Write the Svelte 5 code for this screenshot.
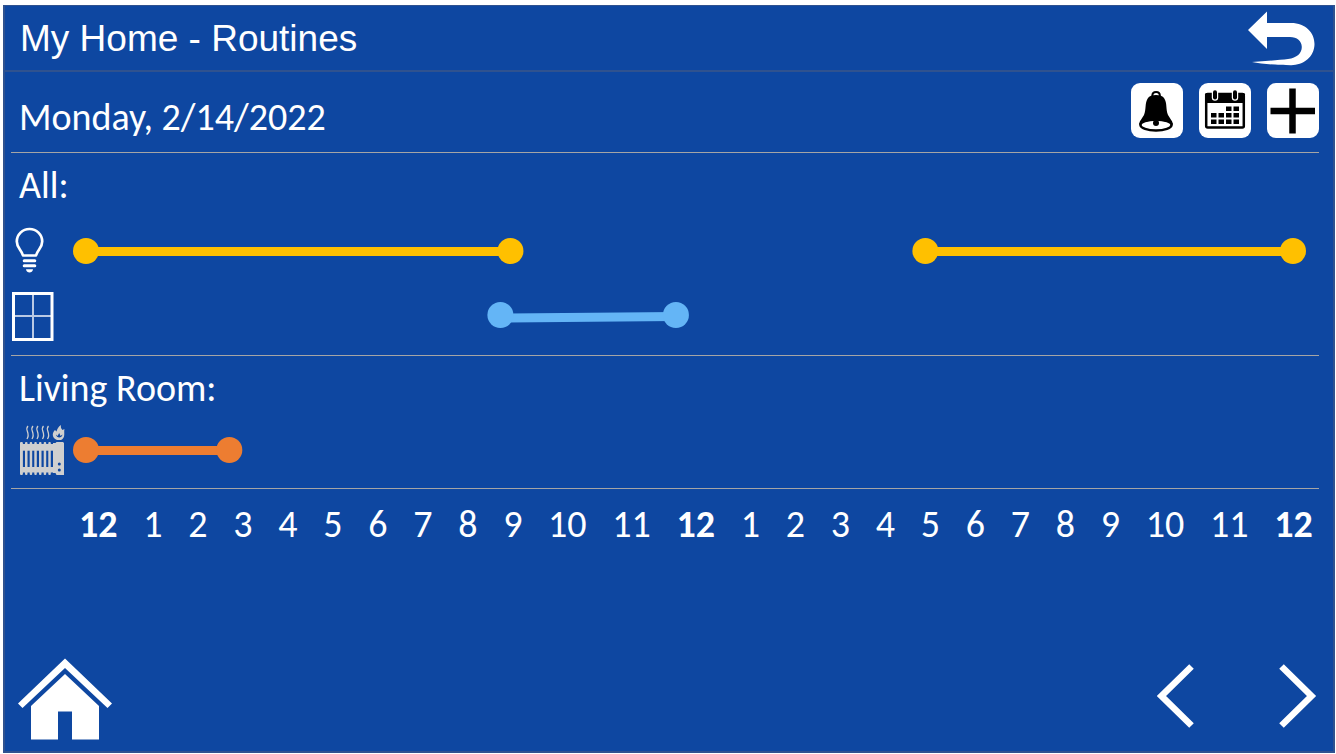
<script>
  // Hours are counted from midnight; the axis covers one full day.
  const groups = [
    {
      name: 'All:',
      rows: [
        { device: 'light', color: '#ffc000', spans: [{ from: 0, to: 8.44 }, { from: 16.69, to: 24 }] },
        { device: 'window', color: '#64b5f6', slope: true, spans: [{ from: 8.24, to: 11.73 }] }
      ]
    },
    {
      name: 'Living Room:',
      rows: [{ device: 'heater', color: '#ed7d31', spans: [{ from: 0, to: 2.85 }] }]
    }
  ];
  const hours = Array.from({ length: 25 }, (_, h) => h % 12 || 12);
  const pct = (h) => `${(h / 24) * 100}%`;
  const fins = [25, 29.7, 34.3, 39, 43.7, 48.3];
</script>

<main class="panel">
  <header class="titlebar">
    <h1>My Home - Routines</h1>
    <button class="plain" aria-label="Back">
      <svg width="70" height="58" viewBox="1246 10 70 58">
        <path fill="#fff" d="M1248 30 L1267 11.5 V23 H1291 C1306 23 1314.5 33 1314.5 44 C1314.5 57 1303 65.3 1291 65.2 C1278 65 1262 64 1252 62 C1265 61 1280 60 1288 59 C1297 58 1301.8 53 1301.8 47 C1301.8 41 1297 37 1290 37 H1267 V49 Z" />
      </svg>
    </button>
  </header>

  <div class="datebar">
    <h2>Monday, 2/14/2022</h2>
    <div class="actions">
      <button class="tile" aria-label="Alerts">
        <svg width="52" height="55" viewBox="1131 83 52 55">
          <path d="M1152.3 96 C1152.3 90.8 1159.9 90.8 1159.9 96" fill="none" stroke="#000" stroke-width="2" />
          <path d="M1148 98 C1150 94 1162 94 1164 98 C1167.5 103 1165.500 109 1168 115 C1169.500 118 1172 120 1173 124 C1170 132 1142 132 1139 124 C1140 120 1142.500 118 1144 115 C1146.500 109 1144.500 103 1148 98 Z" />
          <ellipse cx="1156" cy="125" rx="15.500" ry="5.500" fill="#fff" stroke="#000" stroke-width="2.500" />
          <path d="M1143 119.500 H1169 L1168 122 C1160 119.800 1152 119.800 1144 122 Z" />
          <circle cx="1156" cy="123" r="3" />
        </svg>
      </button>
      <button class="tile" aria-label="Calendar">
        <svg width="52" height="55" viewBox="1200 83 52 55">
          <rect x="1207.200" y="94" width="37.600" height="33.600" rx="1.500" fill="none" stroke="#000" stroke-width="2.500" />
          <rect x="1206" y="93" width="40" height="10" rx="1.500" />
          {#each [1216, 1236] as x}
            <rect x={x - 3.2} y="89.300" width="6.400" height="11.400" rx="3.200" fill="#fff" />
            <rect x={x - 2} y="90.200" width="4" height="9.400" rx="2" />
          {/each}
          {#each [[1227, 106.5], [1234.5, 106.5], [1212, 113], [1219.5, 113], [1227, 113], [1234.5, 113], [1212, 119.5], [1219.5, 119.5], [1227, 119.5], [1234.5, 119.5]] as [x, y]}
            <rect {x} {y} width="5.500" height="4.500" />
          {/each}
        </svg>
      </button>
      <button class="tile" aria-label="Add routine">
        <svg width="52" height="55" viewBox="1266 84 52 55">
          <path d="M1269.500 112 H1314 M1291.500 89.500 V134.500" stroke="#000" stroke-width="6.500" />
        </svg>
      </button>
    </div>
  </div>

  {#each groups as group}
    <section class="group">
      <h2>{group.name}</h2>
      {#each group.rows as row}
        <div class="row">
          {#if row.device === 'light'}
            <svg class="device" width="54" height="52" viewBox="11 225 54 52" role="img" aria-label="Light">
              <path d="M23 255.500 C21.500 249.500 16.800 248 16.800 241.500 A12.700 12.500 0 0 1 42.200 241.500 C42.200 248 37.500 249.500 36 255.500 Z" fill="none" stroke="#fff" stroke-width="2.700" stroke-linejoin="round" />
              <path d="M24.200 260.700 H34.800 M24.200 265.800 H34.800" stroke="#fff" stroke-width="3" stroke-linecap="round" />
              <path d="M26 269.300 H33 C32.500 273.600 26.500 273.600 26 269.300 Z" fill="#fff" />
            </svg>
          {:else if row.device === 'window'}
            <svg class="device" width="54" height="52" viewBox="11 290 54 52" role="img" aria-label="Window">
              <path d="M33 293 V340 M13 316 H52" stroke="#b9c9e4" stroke-width="2" />
              <rect x="13.500" y="293.500" width="38.500" height="46" fill="none" stroke="#fff" stroke-width="3" />
            </svg>
          {:else}
            <svg class="device" width="54" height="52" viewBox="11 424 54 52" role="img" aria-label="Heater">
              <g fill="#cfcfcf">
                <rect x="20" y="444" width="44" height="6.700" />
                <rect x="20" y="467" width="44" height="5.500" />
                <rect x="20" y="442" width="2.900" height="33" rx="1" />
                {#each fins as x}
                  <rect {x} y="442" width="2.500" height="33" rx="1" />
                {/each}
                <path d="M53 443 H55.500 L56.500 442 H63 L64 443 V475 H56.500 L55.500 473 H53 Z" />
                <path d="M57 440 C51.500 438 52 433 55 430 L56.500 431.500 C57 429 58.500 426.500 61 425 C60.500 428 61.500 428.500 62.500 430 L64.500 429 C63.500 432 66 438 61 440 Z" />
              </g>
              <path d="M56 434.500 L57.500 436 L59.200 433 L60.500 436 L62.500 434.500 C62 438.500 56.500 438.500 56 434.500 Z" fill="#0e47a1" />
              <circle cx="59.300" cy="464" r="1.500" fill="#0e47a1" />
              <circle cx="59.300" cy="470" r="1.500" fill="#0e47a1" />
              {#each [28, 33, 38, 43.5, 48.5] as x}
                <path d="M{x} 426 C{x - 4} 430 {x + 3} 433 {x - 1} 439" fill="none" stroke="#cfcfcf" stroke-width="1.300" />
              {/each}
            </svg>
          {/if}
          <svg class="track" role="img" aria-label="Scheduled hours">
            {#each row.spans as span}
              <line x1={pct(span.from)} x2={pct(span.to)} y1={row.slope ? 15 : 13.5} y2={row.slope ? 13.5 : 13.5} stroke={row.color} stroke-width="9" />
              <circle cx={pct(span.from)} cy={row.slope ? 12 : 13} r="13" fill={row.color} />
              <circle cx={pct(span.to)} cy={row.slope ? 12 : 13} r="13" fill={row.color} />
            {/each}
          </svg>
        </div>
      {/each}
    </section>
  {/each}

  <ol class="axis">
    {#each hours as hour}
      <li class:major={hour === 12}>{hour}</li>
    {/each}
  </ol>

  <footer class="nav">
    <button class="plain" aria-label="Home">
      <svg width="96" height="84" viewBox="17 657 96 84">
        <path fill="#fff" d="M65 658.500 L112 703.500 L107.500 708 L65 668 L22.500 708 L18 703.500 Z M65 674 L99 706 V739.500 H72 V711.500 H58 V739.500 H31 V706 Z" />
      </svg>
    </button>
    <div class="pager">
      <button class="plain" aria-label="Previous day">
        <svg width="38" height="66" viewBox="1157 663 38 66">
          <path d="M1191.500 666.500 L1161.500 696 L1191.500 725.500" fill="none" stroke="#fff" stroke-width="6.500" />
        </svg>
      </button>
      <button class="plain" aria-label="Next day">
        <svg width="38" height="66" viewBox="1279 663 38 66">
          <path d="M1281.500 666.500 L1311.500 696 L1281.500 725.500" fill="none" stroke="#fff" stroke-width="6.500" />
        </svg>
      </button>
    </div>
  </footer>
</main>

<style>
  :global(body) {
    background: #fff;
  }
  .panel {
    box-sizing: border-box;
    display: flex;
    flex-direction: column;
    min-height: calc(100vh - 6px);
    margin: 5px 1px 1px 3px;
    border: 2px solid #2f528f;
    border-width: 1px 2px 2px;
    background: #0e47a1;
    color: #fff;
    font-family: Carlito, Calibri, Lato, sans-serif;
    font-size: 38px;
    line-height: 40px;
  }
  h1,
  h2 {
    margin: 0;
    font-weight: 400;
    font-size: inherit;
  }
  button {
    padding: 0;
    border: 0;
    cursor: pointer;
  }
  svg {
    display: block;
  }
  .plain {
    background: none;
  }
  .titlebar {
    display: flex;
    align-items: center;
    justify-content: space-between;
    height: 62px;
    padding: 2px 17px 0 15px;
    border-bottom: 2px solid #2f528f;
  }
  h1 {
    font-family: "Liberation Sans", Arial, sans-serif;
    font-size: 37px;
    line-height: 44px;
  }
  .datebar {
    display: flex;
    justify-content: space-between;
    margin: 0 14px 0 6px;
    padding: 11px 0 14px 8px;
    border-bottom: 1px solid #a5a5a5;
  }
  .datebar h2 {
    padding-top: 14px;
  }
  .actions {
    display: flex;
    gap: 16px;
  }
  .tile {
    border-radius: 9px;
    background: #fff;
  }
  .group {
    margin: 0 14px 0 6px;
    padding: 12px 0;
    border-bottom: 1px solid #a5a5a5;
  }
  .group:first-of-type {
    padding-bottom: 13px;
  }
  .group h2 {
    padding-left: 8px;
    margin-bottom: 20px;
  }
  .group:last-of-type h2 {
    margin-bottom: 16px;
  }
  .row {
    display: grid;
    grid-template-columns: 54px 1fr;
    column-gap: 21px;
    align-items: center;
    padding-right: 26px;
  }
  .row + .row {
    margin-top: 13px;
  }
  .track {
    width: 100%;
    height: 26px;
    overflow: visible;
  }
  .axis {
    display: flex;
    justify-content: space-between;
    margin: 0;
    padding: 15px 20px 0 74px;
    list-style: none;
  }
  .major {
    font-weight: 700;
  }
  .nav {
    display: flex;
    align-items: flex-start;
    justify-content: space-between;
    margin-top: auto;
    padding: 24px 16px 10px 12px;
  }
  .pager {
    display: flex;
    gap: 84px;
    padding-top: 6px;
  }
</style>
